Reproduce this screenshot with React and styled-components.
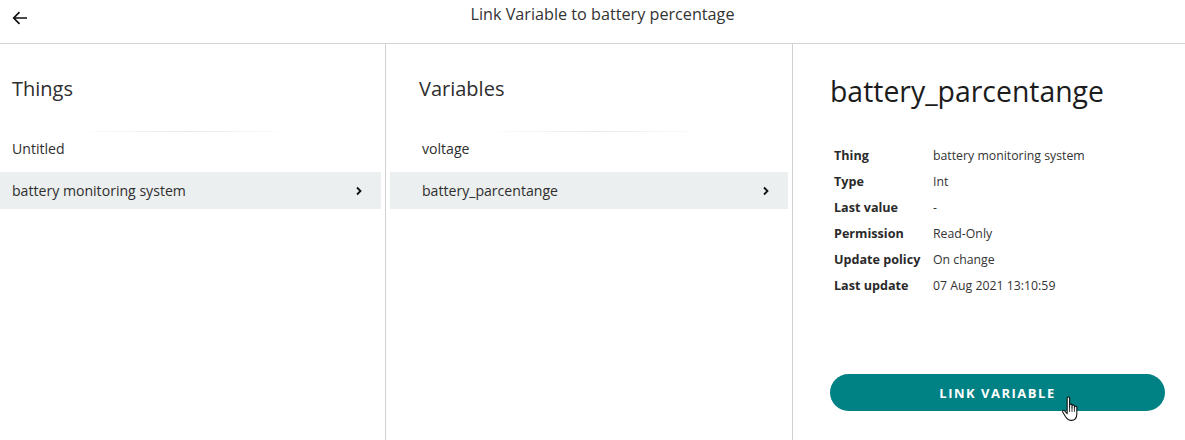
import React from 'react';
import styled, { createGlobalStyle } from 'styled-components';

const GlobalStyle = createGlobalStyle`
  html, body {
    margin: 0;
    padding: 0;
    background: #fff;
    font-family: "Open Sans", "Noto Sans", sans-serif;
    color: #2a2a2a;
  }
`;

const Page = styled.div`
  width: 1185px;
  height: 440px;
  display: flex;
  flex-direction: column;
  overflow: hidden;
`;

const Header = styled.div`
  height: 43px;
  border-bottom: 1px solid #d2d2d2;
  display: flex;
  align-items: center;
  position: relative;
  justify-content: center;
`;

const BackButton = styled.button`
  position: absolute;
  left: 10px;
  top: 8px;
  width: 20px;
  height: 20px;
  border: 0;
  background: none;
  padding: 0;
  display: flex;
  align-items: center;
  justify-content: center;
`;

const Title = styled.div`
  font-size: 16.2px;
  color: #333;
  margin: -15px 0 0 20px;
`;

const Columns = styled.div`
  flex: 1;
  display: grid;
  grid-template-columns: 386px 407px 1fr;
`;

const Column = styled.div`
  border-right: ${(p) => (p.last ? 'none' : '1px solid #d2d2d2')};
  padding: 0 4px 0 ${(p) => p.padLeft}px;
  display: flex;
  flex-direction: column;
`;

const ColumnTitle = styled.h2`
  margin: 0;
  font-weight: 400;
  font-size: 20px;
  color: #2e2e2e;
  height: 45px;
  padding: 32px 0 0 ${(p) => p.indent}px;
  line-height: 26px;
  box-sizing: content-box;
`;

const Fade = styled.div`
  height: 1px;
  margin: 10px 0 0 ${(p) => p.offset}px;
  width: 220px;
  background: linear-gradient(90deg, rgba(235,235,235,0), rgba(232,232,232,1) 50%, rgba(235,235,235,0));
`;

const List = styled.div`
  display: flex;
  flex-direction: column;
  gap: 5px;
  margin-top: -2px;
`;

const Row = styled.div`
  height: 37px;
  display: flex;
  align-items: center;
  justify-content: space-between;
  padding: 0 18px 0 ${(p) => p.indent}px;
  font-size: 14.1px;
  color: #2e2e2e;
  background: ${(p) => (p.selected ? '#ecefef' : 'transparent')};
`;

const Chevron = styled.span`
  display: flex;
  align-items: center;
`;

const Detail = styled.div`
  padding: 28px 20px 0 37px;
  display: flex;
  flex-direction: column;
  height: 100%;
  box-sizing: border-box;
`;

const DetailTitle = styled.h1`
  margin: 0;
  font-weight: 400;
  font-size: 28.4px;
  line-height: 38px;
  color: #1c1c1c;
`;

const Table = styled.div`
  margin-top: 32px;
  padding-left: 4px;
  display: grid;
  grid-template-columns: 99px 1fr;
  grid-auto-rows: 26px;
  align-items: center;
`;

const Label = styled.div`
  font-weight: 700;
  font-size: 12.6px;
  color: #2a2a2a;
`;

const Value = styled.div`
  font-size: 12.3px;
  color: #333;
`;

const ButtonWrap = styled.div`
  margin-top: auto;
  margin-bottom: 29px;
  position: relative;
`;

const LinkButton = styled.button`
  width: 335px;
  height: 37px;
  border: 0;
  border-radius: 19px;
  background: #008184;
  color: #fff;
  font-family: "Open Sans", sans-serif;
  font-weight: 700;
  font-size: 13px;
  letter-spacing: 1.5px;
  padding: 0;
`;

const Cursor = styled.svg`
  position: absolute;
  left: 231px;
  top: 21px;
`;

const things = [
  { name: 'Untitled' },
  { name: 'battery monitoring system', selected: true },
];

const variables = [
  { name: 'voltage' },
  { name: 'battery_parcentange', selected: true },
];

const details = [
  ['Thing', 'battery monitoring system'],
  ['Type', 'Int'],
  ['Last value', '-'],
  ['Permission', 'Read-Only'],
  ['Update policy', 'On change'],
  ['Last update', '07 Aug 2021 13:10:59'],
];

const ChevronIcon = () => (
  <svg width="8" height="10" viewBox="0 0 8 10">
    <path d="M2 1.5 L5.5 5 L2 8.5" fill="none" stroke="#111" strokeWidth="1.8" />
  </svg>
);

const App = () => {
  return (
    <Page>
      <GlobalStyle />
      <Header>
        <BackButton>
          <svg width="18" height="16" viewBox="0 0 18 16">
            <path d="M16 8 H3 M8.5 2.2 L2.7 8 L8.5 13.8" fill="none" stroke="#111" strokeWidth="1.7" />
          </svg>
        </BackButton>
        <Title>Link Variable to battery percentage</Title>
      </Header>
      <Columns>
        <Column padLeft={0}>
          <ColumnTitle indent={12}>Things</ColumnTitle>
          <Fade offset={75} />
          <List>
            {things.map((item) => (
              <Row key={item.name} indent={12} selected={item.selected}>
                <span>{item.name}</span>
                {item.selected && <Chevron><ChevronIcon /></Chevron>}
              </Row>
            ))}
          </List>
        </Column>
        <Column padLeft={4}>
          <ColumnTitle indent={29}>Variables</ColumnTitle>
          <Fade offset={95} />
          <List>
            {variables.map((item) => (
              <Row key={item.name} indent={32} selected={item.selected}>
                <span>{item.name}</span>
                {item.selected && <Chevron><ChevronIcon /></Chevron>}
              </Row>
            ))}
          </List>
        </Column>
        <Column last padLeft={0}>
          <Detail>
            <DetailTitle>battery_parcentange</DetailTitle>
            <Table>
              {details.map(([k, v]) => (
                <React.Fragment key={k}>
                  <Label>{k}</Label>
                  <Value>{v}</Value>
                </React.Fragment>
              ))}
            </Table>
            <ButtonWrap>
              <LinkButton>LINK VARIABLE</LinkButton>
              <Cursor width="22" height="29" viewBox="0 0 18 24">
                <path
                  d="M5 2.5 C5 1.4 7 1.4 7 2.5 V10 V8.3 C7 7.3 9 7.3 9 8.3 V10.5 V9 C9 8 11 8 11 9 V11 V10 C11 9 13 9 13 10 V15.5 C13 19 11.5 21 8.5 21 C6 21 5 20 3.7 18 L1.3 14 C0.8 13 2 12.2 2.8 13 L5 15.5 Z"
                  fill="#fff"
                  stroke="#111"
                  strokeWidth="0.9"
                  strokeLinejoin="round"
                />
                <path d="M7 10 V14 M9 10.5 V14 M11 11 V14" stroke="#111" strokeWidth="0.7" />
              </Cursor>
            </ButtonWrap>
          </Detail>
        </Column>
      </Columns>
    </Page>
  );
};

export default App;
